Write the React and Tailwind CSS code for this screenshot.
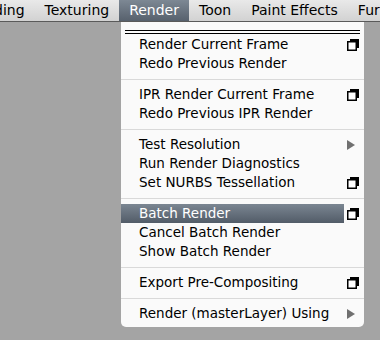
import React from 'react';

const OptionBox = () => (
  <svg width="12" height="12" viewBox="0 0 12 12" className="block">
    <rect x="3" y="0" width="9" height="9" fill="#000" />
    <rect x="0.75" y="2.75" width="8.5" height="8.5" fill="#fff" stroke="#000" strokeWidth="1.5" />
  </svg>
);

const SubArrow = () => (
  <svg width="8" height="10" viewBox="0 0 8 10" className="block">
    <polygon points="0,0 8,5 0,10" fill="#707070" />
  </svg>
);

const Item = ({ label, option, submenu, active }) => (
  <div className="flex h-[19px] items-center">
    <div
      className={`flex h-full w-[223px] items-center pl-[18px] ${
        active ? 'bg-gradient-to-b from-[#7b8692] to-[#525c68] text-white' : 'text-black'
      }`}
    >
      {label}
    </div>
    <div className="flex w-[20px] items-center justify-start pl-[3px]">
      {option && <OptionBox />}
      {submenu && <SubArrow />}
    </div>
  </div>
);

const Sep = () => (
  <div className="flex h-[12px] items-center">
    <div className="h-px w-full bg-[#d9d9d9]" />
  </div>
);

const menuBar = ['ding', 'Texturing', 'Render', 'Toon', 'Paint Effects', 'Fur'];

export default function App() {
  return (
    <div
      className="h-[340px] w-[380px] overflow-hidden bg-[#a4a4a4] text-[13.5px]"
      style={{ fontFamily: '"DejaVu Sans", Verdana, sans-serif' }}
    >
      {/* menu bar */}
      <div className="flex h-[22px] items-stretch border-b border-[#5a5a5a] bg-gradient-to-b from-[#e9e9e9] to-[#d2d2d2]">
        {menuBar.map((m, i) => (
          <div
            key={m}
            className={`flex shrink-0 items-center text-[14px] ${
              i === 0 ? 'ml-[-6px] pr-[10px]' : 'px-[10px]'
            } ${m === 'Render' ? 'bg-gradient-to-b from-[#7d8894] to-[#57616d] text-white' : 'text-black'}`}
          >
            {m}
          </div>
        ))}
      </div>

      {/* dropdown */}
      <div className="ml-[121px] w-[243px] rounded-b-[5px] bg-[#fafafa] pb-[4px]">
        <div className="flex h-[13px] flex-col gap-[2px] px-[4px] pt-[8px]">
          <div className="h-px bg-black" />
          <div className="h-px bg-black" />
        </div>
        <Item label="Render Current Frame" option />
        <Item label="Redo Previous Render" />
        <Sep />
        <Item label="IPR Render Current Frame" option />
        <Item label="Redo Previous IPR Render" />
        <Sep />
        <Item label="Test Resolution" submenu />
        <Item label="Run Render Diagnostics" />
        <Item label="Set NURBS Tessellation" option />
        <Sep />
        <Item label="Batch Render" option active />
        <Item label="Cancel Batch Render" />
        <Item label="Show Batch Render" />
        <Sep />
        <Item label="Export Pre-Compositing" option />
        <Sep />
        <Item label="Render (masterLayer) Using" submenu />
      </div>
    </div>
  );
}
